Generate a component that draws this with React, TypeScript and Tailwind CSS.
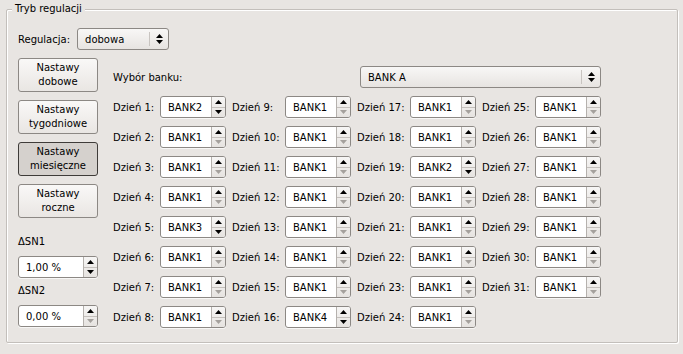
import React from "react";

const font = { fontFamily: '"DejaVu Sans", "Liberation Sans", sans-serif' };

function Tri({ up, off }: { up?: boolean; off?: boolean }) {
  return (
    <svg width="7" height="4" viewBox="0 0 7 4" className="block">
      <path d={up ? "M0 4 L3.5 0 L7 4 Z" : "M0 0 L7 0 L3.5 4 Z"} fill={off ? "#a5a19d" : "#000000"} />
    </svg>
  );
}

function Spin({ value, w = 66, downOff }: { value: string; w?: number; downOff?: boolean }) {
  return (
    <div
      className="flex h-[22px] rounded-[3px] border border-[#8c8884] bg-white shadow-[0_1px_0_rgba(255,255,255,0.7)]"
      style={{ width: w }}
    >
      <div className="flex flex-1 items-center pl-[7px] text-[10px] text-black">{value}</div>
      <div className="flex w-[14px] flex-col rounded-r-[2px] border-l border-[#b5b1ad] bg-gradient-to-b from-[#f7f6f5] to-[#e6e3e0]">
        <div className="flex flex-1 items-center justify-center border-b border-[#c4c0bc]">
          <Tri up />
        </div>
        <div className="flex flex-1 items-center justify-center">
          <Tri off={downOff} />
        </div>
      </div>
    </div>
  );
}

function Combo({ value, w }: { value: string; w: number }) {
  return (
    <div
      className="flex h-[22px] items-center rounded-[3px] border border-[#8c8884] bg-gradient-to-b from-[#f8f7f6] to-[#e7e4e1]"
      style={{ width: w }}
    >
      <div className="flex-1 pl-[7px] text-[10px] text-black">{value}</div>
      <div className="flex h-[14px] w-[19px] flex-col items-center justify-center gap-[2px] border-l border-[#c8c4c0]">
        <Tri up />
        <Tri />
      </div>
    </div>
  );
}

function Btn({ label, pressed }: { label: string[]; pressed?: boolean }) {
  return (
    <div
      className={
        "flex h-[34px] w-[80px] flex-col items-center justify-center rounded-[3px] border text-center text-[10px] leading-[14px] text-black " +
        (pressed
          ? "border-[#3f3c39] bg-[#d5d1cd]"
          : "border-[#8c8884] bg-gradient-to-b from-[#f9f8f7] to-[#e9e6e3]")
      }
    >
      {label.map((l) => (
        <span key={l}>{l}</span>
      ))}
    </div>
  );
}

const banks: Record<number, string> = { 1: "BANK2", 5: "BANK3", 16: "BANK4", 19: "BANK2" };

export default function App() {
  const rows = Array.from({ length: 8 }, (_, r) => r);
  return (
    <div className="h-[354px] w-[683px] bg-[#e8e5e2] pl-[6px] pt-[9px] text-black" style={font}>
      <div className="relative h-[334px] w-[672px] rounded-[2px] border border-[#c3bfbb] px-[11px] pt-[18px] shadow-[inset_1px_1px_0_#ffffff,1px_1px_0_#ffffff]">
        <span className="absolute left-[5px] top-[-8px] bg-[#e8e5e2] px-[3px] text-[10px] leading-[14px]">
          Tryb regulacji
        </span>

        <div className="flex h-[22px] items-center gap-[7px]">
          <span className="text-[10px]">Regulacja:</span>
          <Combo value="dobowa" w={92} />
        </div>

        <div className="mt-[8px] flex">
          <div className="flex w-[80px] flex-col">
            <div className="flex flex-col gap-[8px]">
              <Btn label={["Nastawy", "dobowe"]} />
              <Btn label={["Nastawy", "tygodniowe"]} />
              <Btn label={["Nastawy", "miesięczne"]} pressed />
              <Btn label={["Nastawy", "roczne"]} />
            </div>
            <div className="mt-[16px] h-[16px] text-[10px] leading-[16px]">ΔSN1</div>
            <div className="mt-[6px]">
              <Spin value="1,00 %" w={80} />
            </div>
            <div className="mt-[5px] h-[16px] text-[10px] leading-[16px]">ΔSN2</div>
            <div className="mt-[6px]">
              <Spin value="0,00 %" w={80} downOff />
            </div>
          </div>

          <div className="ml-[15px] w-[488px] pt-[8px]">
            <div className="flex h-[22px] items-center justify-between">
              <span className="text-[10px]">Wybór banku:</span>
              <Combo value="BANK A" w={241} />
            </div>
            <div className="mt-[8px] flex flex-col gap-[8px]">
              {rows.map((r) => (
                <div key={r} className="flex h-[22px] gap-[6px]">
                  {[0, 1, 2, 3].map((c) => {
                    const d = c * 8 + r + 1;
                    if (d > 31) return null;
                    const v = banks[d] ?? "BANK1";
                    return (
                      <div key={c} className="flex items-center">
                        <span className={"text-[10px] " + (c === 0 ? "w-[47px]" : "w-[53px]")}>
                          Dzień {d}:
                        </span>
                        <Spin value={v} downOff={v === "BANK1"} />
                      </div>
                    );
                  })}
                </div>
              ))}
            </div>
          </div>
        </div>
      </div>
    </div>
  );
}
